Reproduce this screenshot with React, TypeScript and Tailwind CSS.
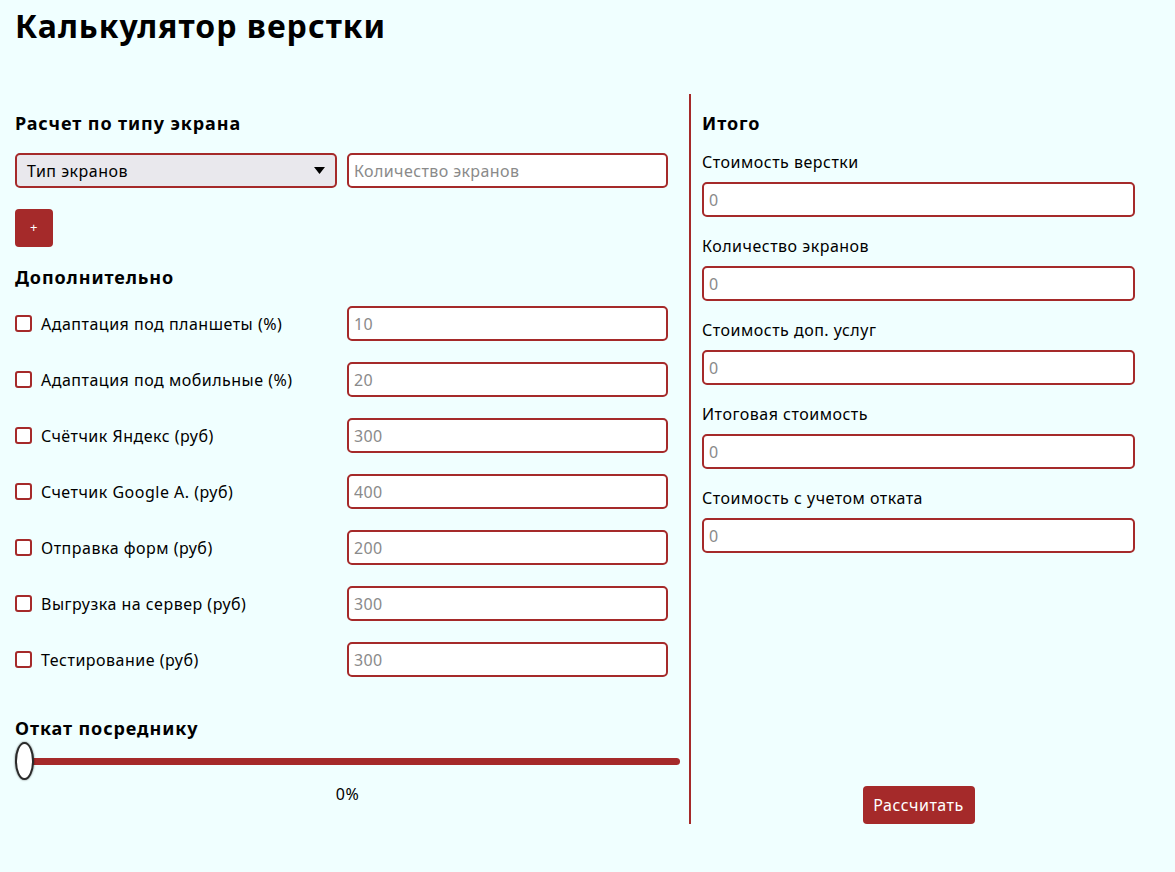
import { useState } from 'react'

const extras = [
  { label: 'Адаптация под планшеты (%)', value: '10' },
  { label: 'Адаптация под мобильные (%)', value: '20' },
  { label: 'Счётчик Яндекс (руб)', value: '300' },
  { label: 'Счетчик Google A. (руб)', value: '400' },
  { label: 'Отправка форм (руб)', value: '200' },
  { label: 'Выгрузка на сервер (руб)', value: '300' },
  { label: 'Тестирование (руб)', value: '300' },
]

const totals = [
  'Стоимость верстки',
  'Количество экранов',
  'Стоимость доп. услуг',
  'Итоговая стоимость',
  'Стоимость с учетом отката',
]

const inputCls =
  'h-[35px] rounded-[5px] border-2 border-[#a52a2a] bg-white px-[5px] text-[16px] tracking-[0.4px] text-black outline-none placeholder:text-[#8a8a8a]'

export default function App() {
  const [rollback] = useState(0)

  return (
    <div className="min-h-screen bg-[#f0ffff] px-[15px] pt-[6px] font-['Noto_Sans',sans-serif] tracking-[0.5px] text-black">
      <h1 className="text-[32px] leading-[40px] font-bold tracking-[1px]">Калькулятор верстки</h1>

      <div className="mt-[48px] flex">
        {/* Left: inputs */}
        <div className="w-[665px] pt-[17px] pb-[20px]">
          <h2 className="text-[18px] leading-[24px] font-bold tracking-[0.9px]">Расчет по типу экрана</h2>

          <div className="mt-[18px] flex gap-[10px]">
            <div className="flex h-[35px] w-[322px] items-center rounded-[5px] border-2 border-[#a52a2a] bg-[#e9e8ed] px-[10px] text-[16px]">
              <span className="flex-1">Тип экранов</span>
              <svg width="11" height="7" viewBox="0 0 11 7">
                <path d="M0 0h11L5.5 7z" fill="#000" />
              </svg>
            </div>
            <input className={`${inputCls} w-[321px]`} placeholder="Количество экранов" />
          </div>

          <button className="mt-[21px] flex h-[38px] w-[38px] items-center justify-center rounded-[4px] bg-[#a52a2a] text-[13px] text-white">
            +
          </button>

          <h2 className="mt-[18px] text-[18px] leading-[24px] font-bold tracking-[0.9px]">Дополнительно</h2>

          <div className="mt-[17px] flex flex-col gap-[21px]">
            {extras.map((item) => (
              <div key={item.label} className="flex items-center">
                <label className="flex w-[332px] items-center gap-[9px] text-[16px]">
                  <span className="h-[17px] w-[17px] shrink-0 rounded-[3px] border-2 border-[#a52a2a] bg-white" />
                  {item.label}
                </label>
                <input className={`${inputCls} w-[321px]`} placeholder={item.value} />
              </div>
            ))}
          </div>

          <h2 className="mt-[39px] text-[18px] leading-[24px] font-bold tracking-[0.9px]">Откат посреднику</h2>

          <div className="relative mt-[2px] flex h-[38px] items-center">
            <div className="h-[7px] w-full rounded-full bg-[#a52a2a]" />
            <div className="absolute top-0 left-0 h-[38px] w-[19px] rounded-[50%] border-2 border-[#2b2b2b] bg-white shadow-[0_0_2px_rgba(0,0,0,0.6)]" />
          </div>
          <div className="mt-[4px] text-center text-[16px] leading-[20px]">{rollback}%</div>
        </div>

        {/* Right: totals */}
        <div className="ml-[9px] flex w-[446px] flex-col border-l-2 border-[#a52a2a] pt-[17px] pl-[11px]">
          <h2 className="text-[18px] leading-[24px] font-bold tracking-[0.9px]">Итого</h2>
          <div className="mt-[16px] flex w-[433px] flex-col gap-[18px]">
            {totals.map((label) => (
              <div key={label} className="flex flex-col gap-[9px]">
                <span className="text-[16px] leading-[22px]">{label}</span>
                <input className={inputCls} placeholder="0" />
              </div>
            ))}
          </div>
          <button className="mx-auto mt-auto w-[112px] rounded-[4px] bg-[#a52a2a] py-[8px] text-[16px] leading-[22px] text-white">
            Рассчитать
          </button>
        </div>
      </div>
    </div>
  )
}
